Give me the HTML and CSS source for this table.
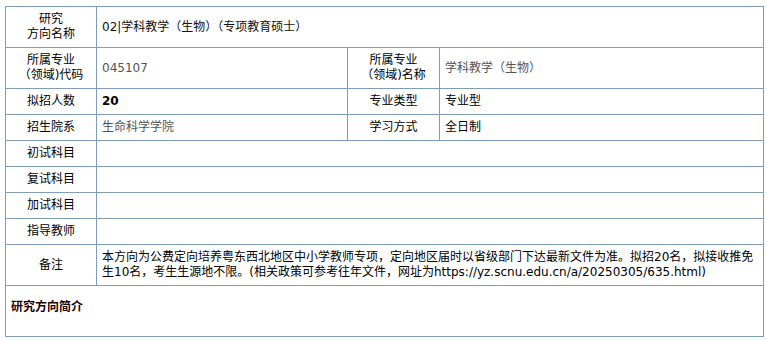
FILE: index.html
```html
<!DOCTYPE html>
<html lang="zh-CN">
<head>
<meta charset="utf-8">
<title>研究方向</title>
<link rel="stylesheet" href="styles.css">
</head>
<body>
<table class="info">
  <colgroup>
    <col class="c1"><col class="c2"><col class="c3"><col class="c4">
  </colgroup>
  <tr>
    <th>研究<br>方向名称</th>
    <td colspan="3" class="dark">02|学科教学（生物）（专项教育硕士）</td>
  </tr>
  <tr>
    <th>所属专业<br>（领域)代码</th>
    <td class="grey">045107</td>
    <th>所属专业<br>（领域)名称</th>
    <td class="grey">学科教学（生物）</td>
  </tr>
  <tr>
    <th>拟招人数</th>
    <td class="bold">20</td>
    <th>专业类型</th>
    <td>专业型</td>
  </tr>
  <tr>
    <th>招生院系</th>
    <td class="grey">生命科学学院</td>
    <th>学习方式</th>
    <td>全日制</td>
  </tr>
  <tr><th>初试科目</th><td colspan="3"></td></tr>
  <tr><th>复试科目</th><td colspan="3"></td></tr>
  <tr><th>加试科目</th><td colspan="3"></td></tr>
  <tr><th>指导教师</th><td colspan="3"></td></tr>
  <tr>
    <th>备注</th>
    <td colspan="3">本方向为公费定向培养粤东西北地区中小学教师专项，定向地区届时以省级部门下达最新文件为准。拟招20名，拟接收推免<br>生10名，考生生源地不限。(相关政策可参考往年文件，网址为https://yz.scnu.edu.cn/a/20250305/635.html)</td>
  </tr>
  <tr>
    <td colspan="4" class="intro"><span class="intro-title">研究方向简介</span></td>
  </tr>
</table>
</body>
</html>
```
FILE: styles.css
```css
html, body {
  margin: 0;
  padding: 0;
  background: #ffffff;
}

body {
  padding: 6px 0 0 5px;
  font-family: "DejaVu Sans", "Noto Sans CJK SC", sans-serif;
  font-size: 12px;
  line-height: 15px;
  color: #000;
}

.info {
  border-collapse: collapse;
  table-layout: fixed;
  width: 758px;
}

.info .c1 { width: 91px; }
.info .c2 { width: 251px; }
.info .c3 { width: 92px; }
.info .c4 { width: 324px; }

.info th,
.info td {
  border: 1px solid #7f9db9;
  padding: 5px 5px;
  height: 15px;
  vertical-align: middle;
}

.info th {
  font-weight: normal;
  text-align: center;
  color: #000;
}

.info td {
  text-align: left;
}

.info .dark { color: #111; }
.info .grey { color: #555; }
.info .bold { font-weight: bold; }

.info .intro {
  vertical-align: top;
  padding: 14px 5px 21px;
}

.intro-title {
  font-weight: bold;
  color: #1a0000;
}
```
